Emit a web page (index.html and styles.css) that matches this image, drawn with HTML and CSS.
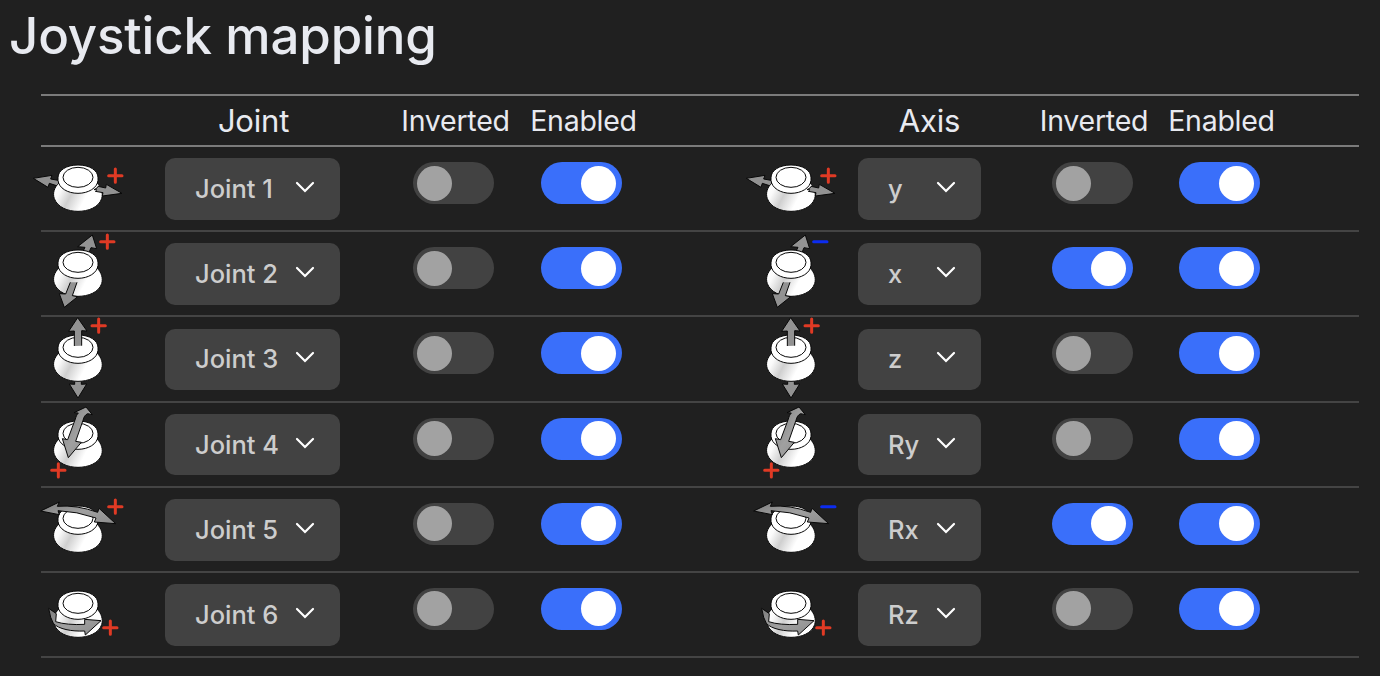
FILE: index.html
```html
<!DOCTYPE html>
<html lang="en">
<head>
    <meta charset="UTF-8">
    <meta name="viewport" content="width=device-width, initial-scale=1.0">
    <title>Joystick mapping</title>
    <link rel="stylesheet" href="styles.css">
</head>
<body>
    <!-- Shared shapes for the joystick icons -->
    <svg class="defs" width="0" height="0">
        <defs>
            <linearGradient id="shade" x1="0" y1="0.3" x2="1" y2="0.6">
                <stop offset="0" stop-color="#fff"/>
                <stop offset="0.12" stop-color="#fafafa"/>
                <stop offset="0.36" stop-color="#cfcfcf"/>
                <stop offset="0.66" stop-color="#fff"/>
                <stop offset="1" stop-color="#fff"/>
            </linearGradient>
            <linearGradient id="metal" x1="0" y1="0" x2="1" y2="1">
                <stop offset="0" stop-color="#7c7c7c"/>
                <stop offset="0.5" stop-color="#a0a0a0"/>
                <stop offset="1" stop-color="#8c8c8c"/>
            </linearGradient>
            <g id="knob" stroke="#080808" stroke-width="3">
                <path fill="url(#shade)" d="M87 108C73 120 67 139 73 155C83 181 113 193 144 193C175 193 206 181 215 155C220 139 214 120 201 108Z"/>
                <path fill="#fff" d="M84 92C84 70 109 54 144 54C179 54 204 70 204 92V100C202 123 175 139 144 139C113 139 86 123 84 100Z"/>
                <ellipse fill="#fff" cx="144" cy="91" rx="45" ry="30"/>
            </g>
            <g id="icon-y">
                <path class="arrow" d="M10 94L66 85L62 96L90 101L86 118L58 109L54 121Z"/>
                <use href="#knob"/>
                <path class="arrow" d="M204 118L227 123L229 112L276 139L217 147L219 137L196 133Q206 126 192 128Q204 123 204 118Z"/>
            </g>
            <g id="icon-x">
                <path class="arrow" d="M158 60L165 46L143 44L187 9L200 50L183 47L176 64Z"/>
                <use href="#knob"/>
                <path class="arrow" d="M121 151L107 186L88 185L103 226L143 194L127 191L141 151"/>
            </g>
            <g id="icon-z">
                <path class="arrow" d="M134 186V202L118 201L144 243L170 201L154 202V186Z"/>
                <use href="#knob"/>
                <path class="arrow" d="M133 87V42L116 43L143 2L171 42L155 41V86"/>
            </g>
            <g id="icon-ry">
                <use href="#knob"/>
                <path class="arrow sheen" d="M132 29L168 12L187 35L173 32C164 36 162 42 159 52L137 115L154 118L115 164L97 107L113 110L136 48C138 40 141 34 145 30Z"/>
            </g>
            <g id="icon-rx">
                <use href="#knob"/>
                <path class="arrow sheen" d="M32 69L88 42L82 55Q140 50 203 73L207 61L257 107L193 102L198 90Q140 70 84 68L88 80Z"/>
            </g>
            <g id="icon-rz">
                <use href="#knob"/>
                <path class="arrow sheen" d="M56 106L79 122L77 146Q111 157 164 154V139L213 143L166 186L164 174C125 176 85 168 70 151Q61 137 56 106Z"/>
            </g>
            <path id="plus" class="plus" d="M-20 0H20M0 -20V20"/>
            <path id="minus" class="minus" d="M-20 0H20"/>
            <symbol id="chevron" viewBox="0 0 20 12">
                <path d="M2 2L10 10L18 2" fill="none" stroke="#fff" stroke-width="2.2" stroke-linecap="round"/>
            </symbol>
        </defs>
    </svg>

    <h1 class="title">Joystick mapping</h1>

    <div class="mapping">
        <div class="row header">
            <div class="group joint">
                <span></span>
                <span class="main-label">Joint</span>
                <span class="label">Inverted</span>
                <span class="label">Enabled</span>
            </div>
            <div class="group axis">
                <span></span>
                <span class="main-label">Axis</span>
                <span class="label">Inverted</span>
                <span class="label">Enabled</span>
            </div>
        </div>

        <div class="row">
            <div class="group joint">
                <svg class="icon" viewBox="0 0 300 249"><use href="#icon-y"/><use href="#plus" x="256" y="86"/></svg>
                <div class="select">Joint 1<svg class="chevron"><use href="#chevron"/></svg></div>
                <div class="switch"></div>
                <div class="switch on"></div>
            </div>
            <div class="group axis">
                <svg class="icon" viewBox="0 0 300 249"><use href="#icon-y"/><use href="#plus" x="256" y="86"/></svg>
                <div class="select">y<svg class="chevron"><use href="#chevron"/></svg></div>
                <div class="switch"></div>
                <div class="switch on"></div>
            </div>
        </div>

        <div class="row">
            <div class="group joint">
                <svg class="icon" viewBox="0 0 300 249"><use href="#icon-x"/><use href="#plus" x="232" y="29"/></svg>
                <div class="select">Joint 2<svg class="chevron"><use href="#chevron"/></svg></div>
                <div class="switch"></div>
                <div class="switch on"></div>
            </div>
            <div class="group axis">
                <svg class="icon" viewBox="0 0 300 249"><use href="#icon-x"/><use href="#minus" x="232" y="29"/></svg>
                <div class="select">x<svg class="chevron"><use href="#chevron"/></svg></div>
                <div class="switch on"></div>
                <div class="switch on"></div>
            </div>
        </div>

        <div class="row">
            <div class="group joint">
                <svg class="icon" viewBox="0 0 300 249"><use href="#icon-z"/><use href="#plus" x="206" y="26"/></svg>
                <div class="select">Joint 3<svg class="chevron"><use href="#chevron"/></svg></div>
                <div class="switch"></div>
                <div class="switch on"></div>
            </div>
            <div class="group axis">
                <svg class="icon" viewBox="0 0 300 249"><use href="#icon-z"/><use href="#plus" x="206" y="26"/></svg>
                <div class="select">z<svg class="chevron"><use href="#chevron"/></svg></div>
                <div class="switch"></div>
                <div class="switch on"></div>
            </div>
        </div>

        <div class="row">
            <div class="group joint">
                <svg class="icon" viewBox="0 0 300 249"><use href="#icon-ry"/><use href="#plus" x="85" y="202"/></svg>
                <div class="select">Joint 4<svg class="chevron"><use href="#chevron"/></svg></div>
                <div class="switch"></div>
                <div class="switch on"></div>
            </div>
            <div class="group axis">
                <svg class="icon" viewBox="0 0 300 249"><use href="#icon-ry"/><use href="#plus" x="85" y="202"/></svg>
                <div class="select">Ry<svg class="chevron"><use href="#chevron"/></svg></div>
                <div class="switch"></div>
                <div class="switch on"></div>
            </div>
        </div>

        <div class="row">
            <div class="group joint">
                <svg class="icon" viewBox="0 0 300 249"><use href="#icon-rx"/><use href="#plus" x="256" y="56"/></svg>
                <div class="select">Joint 5<svg class="chevron"><use href="#chevron"/></svg></div>
                <div class="switch"></div>
                <div class="switch on"></div>
            </div>
            <div class="group axis">
                <svg class="icon" viewBox="0 0 300 249"><use href="#icon-rx"/><use href="#minus" x="256" y="56"/></svg>
                <div class="select">Rx<svg class="chevron"><use href="#chevron"/></svg></div>
                <div class="switch on"></div>
                <div class="switch on"></div>
            </div>
        </div>

        <div class="row">
            <div class="group joint">
                <svg class="icon" viewBox="0 0 300 249"><use href="#icon-rz"/><use href="#plus" x="241" y="164"/></svg>
                <div class="select">Joint 6<svg class="chevron"><use href="#chevron"/></svg></div>
                <div class="switch"></div>
                <div class="switch on"></div>
            </div>
            <div class="group axis">
                <svg class="icon" viewBox="0 0 300 249"><use href="#icon-rz"/><use href="#plus" x="241" y="164"/></svg>
                <div class="select">Rz<svg class="chevron"><use href="#chevron"/></svg></div>
                <div class="switch"></div>
                <div class="switch on"></div>
            </div>
        </div>
    </div>
</body>
</html>
```
FILE: styles.css
```css
* {
    box-sizing: border-box;
}
body {
    margin: 0;
    background: #202020;
    color: #e8eaf0;
    font-family: Inter, 'Liberation Sans', sans-serif;
    height: 676px;
    overflow: hidden;
}
.defs {
    display: block;
}
.title {
    margin: 0;
    padding: 5px 0 0 9px;
    height: 94px;
    font-size: 51px;
    line-height: 62px;
    font-weight: 540;
    letter-spacing: -0.15px;
}
.mapping {
    width: 1318px;
    margin-left: 41px;
    border-top: 2px solid #7b7b7b;
}
.row {
    display: flex;
    height: 85.2px;
    border-bottom: 2px solid #444;
}
.row.header {
    height: 51px;
    border-bottom-color: #7b7b7b;
}
.group {
    display: grid;
    align-items: start;
}
.joint {
    width: 713px;
    grid-template-columns: 124px 224px 129px 127px;
}
.axis {
    grid-template-columns: 104px 170px 128px 127px;
}
.header .group {
    align-items: center;
    text-align: center;
}
.main-label {
    font-size: 31px;
    letter-spacing: -0.2px;
}
.joint .main-label {
    padding-right: 47px;
}
.axis .main-label {
    padding-right: 27px;
}
.label {
    font-size: 28.5px;
    letter-spacing: -0.25px;
    padding-left: 4px;
}
.icon {
    width: 100px;
    height: 83px;
    margin-left: -11px;
    overflow: visible;
}
.arrow {
    fill: #929292;
    stroke: #080808;
    stroke-width: 3;
}
.sheen {
    fill: url(#metal);
}
.plus,
.minus {
    fill: none;
    stroke: #e03a24;
    stroke-width: 9;
    stroke-linecap: round;
}
.minus {
    stroke: #0c2cf0;
}
.select {
    display: flex;
    align-items: center;
    justify-content: space-between;
    width: 175px;
    height: 61.5px;
    margin-top: 11.3px;
    padding: 0 25px 1px 30px;
    border-radius: 10px;
    background: #424242;
    color: #cdcdcd;
    font-size: 25.5px;
    font-weight: 540;
}
.axis .select {
    width: 123px;
}
.chevron {
    width: 20px;
    height: 12px;
    margin-bottom: 3px;
}
.switch {
    justify-self: center;
    width: 81px;
    height: 42px;
    margin-top: 15px;
    padding: 3.5px 4px;
    border-radius: 21px;
    background: #424242;
}
.switch::before {
    content: "";
    display: block;
    width: 35px;
    height: 35px;
    border-radius: 50%;
    background: #a2a2a2;
}
.switch.on {
    padding-left: 39.5px;
    background: #3a6ffa;
}
.switch.on::before {
    background: #fff;
}
```
